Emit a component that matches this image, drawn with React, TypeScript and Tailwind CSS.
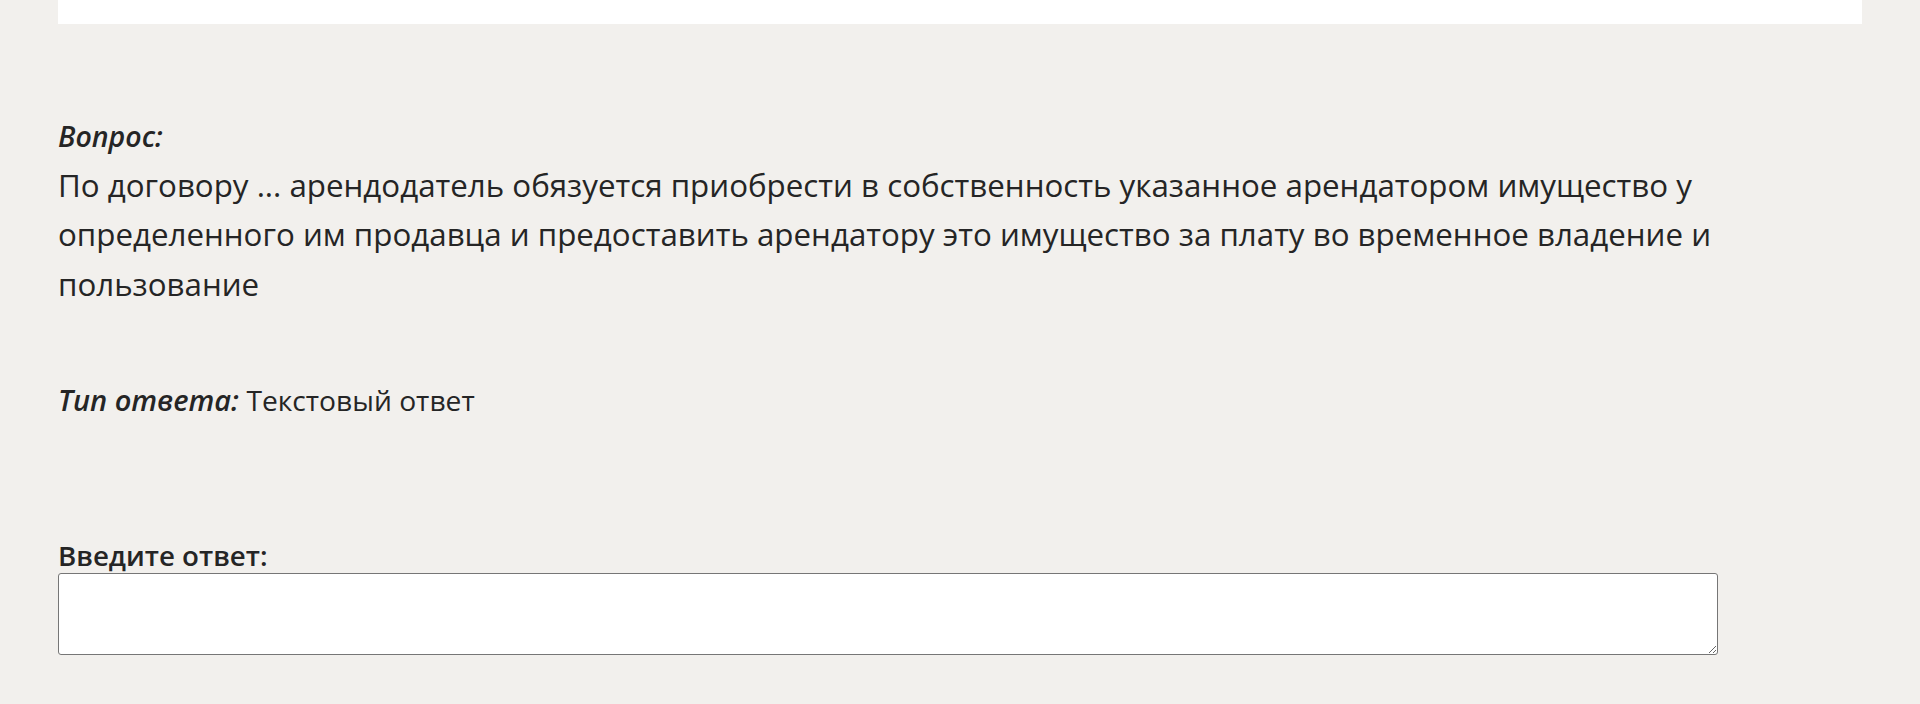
export default function App() {
  return (
    <div
      className="min-h-[704px] bg-[#f2f0ed] px-[58px] text-[#252525]"
      style={{ fontFamily: '"Open Sans", "Noto Sans", sans-serif' }}
    >
      <div className="h-6 bg-white" />

      <div className="mt-[88px]">
        <p className="text-[28.5px] font-semibold italic leading-[48.5px]">Вопрос:</p>
        <p className="text-[31.3px] leading-[49.5px]">
          По договору ... арендодатель обязуется приобрести в собственность указанное арендатором
          имущество у определенного им продавца и предоставить арендатору это имущество за плату во
          временное владение и пользование
        </p>
      </div>

      <p className="mt-[71px] text-[29px] leading-[40px]">
        <span className="font-semibold italic">Тип ответа:</span>{" "}
        <span className="text-[28.2px]">Текстовый ответ</span>
      </p>

      <div className="mt-[117px]">
        <label className="block text-[27.7px] font-semibold leading-[36px]">Введите ответ:</label>
        <textarea className="block h-[82px] w-[1660px] rounded-[3px] border border-[#767676] bg-white" />
      </div>
    </div>
  )
}
